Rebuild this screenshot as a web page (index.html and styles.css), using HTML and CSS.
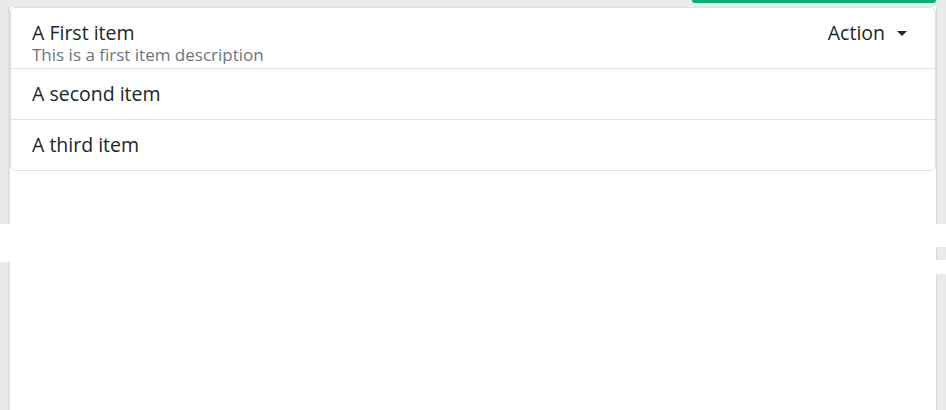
FILE: index.html
```html
<!DOCTYPE html>
<html lang="en">
<head>
<meta charset="utf-8">
<title>List group</title>
<link rel="stylesheet" href="styles.css">
</head>
<body>
<div class="frame">
  <div class="topbar"><div class="accent"></div></div>
  <div class="gutter gutter-left">
    <div class="seg seg-grey seg-top"></div>
    <div class="seg seg-gap-l"></div>
    <div class="seg seg-grey seg-fill"></div>
  </div>
  <main class="main">
    <ul class="list">
      <li class="item item-first">
        <div class="item-text">
          <div class="item-title">A First item</div>
          <div class="item-desc">This is a first item description</div>
        </div>
        <button class="action" type="button">Action <span class="caret"></span></button>
      </li>
      <li class="item">A second item</li>
      <li class="item">A third item</li>
    </ul>
  </main>
  <div class="gutter gutter-right">
    <div class="seg seg-grey seg-top"></div>
    <div class="seg seg-gap-r1"></div>
    <div class="seg seg-grey seg-thumb"></div>
    <div class="seg seg-gap-r2"></div>
    <div class="seg seg-grey seg-fill"></div>
  </div>
</div>
</body>
</html>
```

FILE: styles.css
```css
* { box-sizing: border-box; }
html, body { margin: 0; padding: 0; }
body {
  width: 946px;
  height: 410px;
  overflow: hidden;
  background: #e9eaec;
  font-family: "Open Sans", "Noto Sans", sans-serif;
  color: #212529;
}
.frame {
  display: grid;
  grid-template-columns: 10px 926px 10px;
  grid-template-rows: 7px 403px;
  height: 410px;
}
.topbar {
  grid-column: 1 / -1;
  display: flex;
  justify-content: flex-end;
  padding-right: 10px;
}
.accent {
  width: 244px;
  height: 3px;
  background: #10aa72;
  border-radius: 0 0 4px 4px;
}
.gutter { display: flex; flex-direction: column; }
.seg-grey { background: #e9eaec; }
.gutter-left .seg-grey { box-shadow: inset -2px 0 0 #dcdee1; }
.gutter-right .seg-grey { box-shadow: inset 1px 0 0 #d6d8db; }
.seg-top { height: 217px; }
.seg-gap-l { height: 38px; background: #fff; }
.seg-gap-r1 { height: 23px; background: #fff; }
.seg-thumb { height: 13px; margin-right: 1px; }
.seg-gap-r2 { height: 14px; background: #fff; }
.seg-fill { flex: 1; }
.main { background: #fff; }
.list {
  list-style: none;
  margin: 0;
  padding: 0;
  border: 1px solid #dee2e6;
  border-radius: 6px;
}
.item {
  height: 51px;
  padding: 12px 21px 0;
  font-size: 19.5px;
  line-height: 26px;
  border-top: 1px solid #dee2e6;
}
.item:first-child { border-top: 0; }
.item-first {
  height: 60px;
  display: flex;
  justify-content: space-between;
  align-items: flex-start;
}
.item-title { font-size: 19.5px; line-height: 26px; }
.item-desc {
  font-size: 17px;
  line-height: 18px;
  height: 18px;
  overflow: hidden;
  color: #6c757d;
}
.action {
  display: flex;
  align-items: center;
  gap: 12px;
  margin-right: 7px;
  padding: 0;
  border: 0;
  background: none;
  font: inherit;
  font-size: 19.5px;
  line-height: 26px;
  color: #212529;
}
.caret {
  width: 0;
  height: 0;
  border-left: 5px solid transparent;
  border-right: 5px solid transparent;
  border-top: 5px solid #212529;
}
```
